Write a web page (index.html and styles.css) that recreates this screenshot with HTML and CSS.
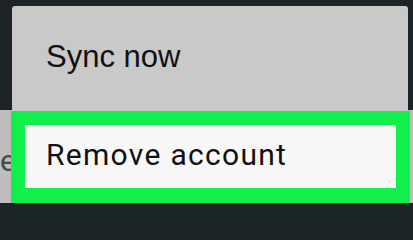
FILE: index.html
```html
<!DOCTYPE html>
<html>
<head>
<meta charset="utf-8">
<link rel="stylesheet" href="styles.css">
</head>
<body>
<div class="screen">
  <div class="topbar"></div>
  <div class="page">
    <div class="bg-row"><span class="bg-text">e</span></div>
  </div>
  <div class="menu">
    <div class="item sync">Sync now</div>
    <div class="item remove"><div class="remove-inner">Remove account</div></div>
  </div>
</div>
</body>
</html>
```
FILE: styles.css
```css
html, body {
  margin: 0;
  padding: 0;
  background: #1d2428;
}
body {
  width: 413px;
  height: 203px;
  overflow: hidden;
}
.screen {
  position: relative;
  width: 413px;
  height: 203px;
  display: flex;
  flex-direction: column;
  overflow: hidden;
}
.topbar {
  height: 110px;
  background: #1d2428;
}
.page {
  flex: 1;
  background: #bdbdbd;
}
.bg-row {
  display: flex;
  padding-top: 36px;
}
.bg-text {
  font-family: Roboto, "Liberation Sans", sans-serif;
  font-size: 30px;
  line-height: 30px;
  color: #4a4a4a;
}
.menu {
  position: absolute;
  left: 12px;
  top: 6px;
  width: 396px;
  bottom: -20px;
  background: #c9c9c9;
  border-radius: 3px 3px 0 0;
  display: flex;
  flex-direction: column;
}
.item {
  color: #111;
}
.sync {
  height: 105px;
  box-sizing: border-box;
  padding: 33px 0 0 34px;
  font-family: "Liberation Sans", Arial, sans-serif;
  font-size: 31px;
  line-height: 36px;
}
.remove {
  margin: 0 -2px 0 -1px;
  border: 14px solid #10ef4b;
  border-bottom-width: 16px;
  background: #10ef4b;
}
.remove-inner {
  background: #f8f8f8;
  height: 63px;
  box-sizing: border-box;
  padding: 12px 0 0 21px;
  font-family: Roboto, "Liberation Sans", sans-serif;
  font-size: 30px;
  line-height: 36px;
  letter-spacing: 1.3px;
}
```
